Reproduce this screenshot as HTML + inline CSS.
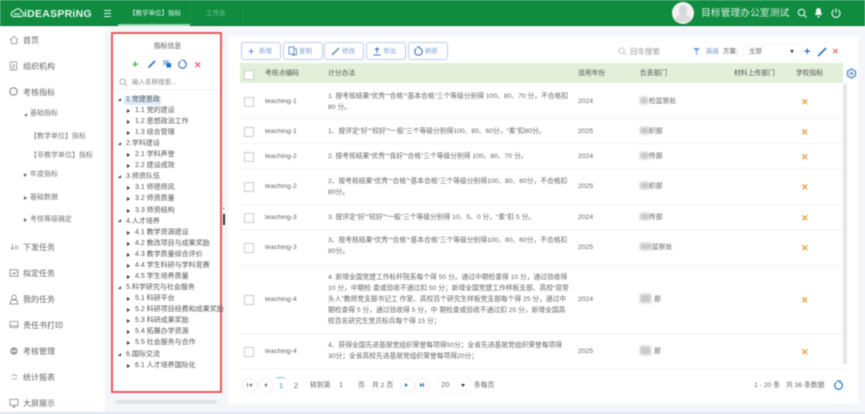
<!DOCTYPE html>
<html lang="zh"><head><meta charset="utf-8"><style>
html,body{margin:0;padding:0;width:865px;height:414px;overflow:hidden;background:#f4f6fc}
#w{position:relative;width:865px;height:414px;overflow:hidden;font-family:"Liberation Sans","Noto Sans CJK SC",sans-serif;font-size:6.8px;color:#666;filter:blur(.55px);background:#f4f6fc}
#w div,#w svg{position:absolute}
.t{white-space:nowrap;line-height:10px;margin-top:.7px}
.m{font-size:8px;color:#666}
.m2{font-size:7px;color:#777}
.t.tr{font-size:7px;color:#555;margin-top:0}
.tri{left:126.500px;width:0;height:0;border-left:3.500px solid #333;border-top:2px solid transparent;border-bottom:2px solid transparent}
.trd{left:118px;width:0;height:0;border-right:3px solid #333;border-top:3px solid transparent}
.st{left:24px;width:0;height:0;border-left:3px solid #666;border-top:2px solid transparent;border-bottom:2px solid transparent}
.btn{top:42px;width:40px;height:18px;border:1px solid #bccdea;border-radius:3px;background:#fff;box-sizing:border-box}
.bt{top:46px;margin-top:.7px;font-size:6.500px;color:#7f9fd0;white-space:nowrap;line-height:10px}
.cb{left:244px;width:8px;height:8px;border:1px solid #ccc;background:#fff;margin-top:.5px}
.ln{left:240px;width:603px;height:1px;background:#f1f2f5}
.x{left:801px;font-size:9px;color:#ee9b3c;font-weight:bold;line-height:10px;margin-top:.7px}
.c{font-size:6.750px;line-height:11px;color:#666;white-space:nowrap;left:328px;margin-top:.7px}
.h{top:68px;margin-top:.7px;font-size:6.800px;color:#555;white-space:nowrap;line-height:10px}
.blur{background:#c9c9c9;filter:blur(1.200px)}
.pc{top:378px;width:13px;height:13px;border:1px solid #f0f0f2;border-radius:50%;background:#fff}
.p{top:380px;margin-top:.7px;white-space:nowrap;line-height:10px;font-size:6.800px;color:#666}
</style></head><body><div id="w">
<!-- header -->
<div style="left:0;top:0;width:865px;height:26px;background:#0f8c40;border-bottom:1px solid #0b6e32;box-sizing:border-box"></div>
<svg style="left:10px;top:8px" width="14" height="10" viewBox="0 0 14 10" fill="none" stroke="#dff3e6" stroke-width="1.200"><path d="M3 8.500h8a2.300 2.300 0 0 0 .4-4.600A3.600 3.600 0 0 0 4.600 3 2.900 2.900 0 0 0 3 8.500z"/><path d="M4 6h6"/></svg>
<div class="t" style="left:24px;top:7px;font-size:10.500px;font-weight:bold;color:#eaf7ef;letter-spacing:.25px;line-height:12px">iDEASPRiNG</div>
<div style="left:104px;top:10px;width:7px;height:1px;background:#e6f5ec;box-shadow:0 3px #e6f5ec,0 6px #e6f5ec"></div>
<div class="t" style="left:129px;top:8px;color:#e6f5ec;font-size:6.500px">【教学单位】指标</div>
<div style="left:118px;top:24px;width:72px;height:2px;background:#9ad8af"></div>
<div style="left:190px;top:0;width:1px;height:25px;background:#1a9448"></div>
<div style="left:242px;top:0;width:1px;height:25px;background:#1a9448"></div>
<div class="t" style="left:206px;top:8px;color:#7fc79a;font-size:6.500px">工作台</div>
<div style="left:672px;top:2px;width:22px;height:22px;border-radius:50%;background:#f2f2f2"></div>
<div style="left:679px;top:5px;width:8px;height:11px;border-radius:50%;background:#d6d6d6"></div>
<div style="left:675px;top:15px;width:16px;height:7px;border-radius:8px 8px 3px 3px;background:#dcdcdc"></div>
<div class="t" style="left:701px;top:7px;font-size:9.800px;color:#d8f0e0;line-height:12px">目标管理办公室测试</div>
<svg style="left:796px;top:7px" width="12" height="12" viewBox="0 0 12 12" fill="none" stroke="#e6f5ec" stroke-width="1.100"><circle cx="5.500" cy="5.500" r="3.200"/><path d="M8 8l2.500 2.500"/></svg>
<svg style="left:813px;top:7px" width="11" height="12" viewBox="0 0 11 12" fill="#eef8f1"><path d="M5.500 1C3.500 1 3 3 3 5L2 8h7L8 5c0-2-.5-4-2.500-4zM4.500 9h2v1.500h-2z"/></svg>
<svg style="left:830px;top:7px" width="12" height="12" viewBox="0 0 12 12" fill="none" stroke="#e6f5ec" stroke-width="1.100"><path d="M3.800 3a4 4 0 1 0 4.400 0M6 1.500V6"/></svg>
<!-- sidebar -->
<div style="left:0;top:27px;width:105px;height:385px;background:#fff"></div>
<svg style="left:9px;top:35px" width="10" height="10" viewBox="0 0 11 11" fill="none" stroke="#888" stroke-width=".8"><path d="M1 5.500 5.500 1.500 10 5.500M2.500 4.500v5h6v-5"/></svg>
<div class="t m" style="left:23px;top:35px">首页</div>
<svg style="left:9px;top:61px" width="9" height="10" viewBox="0 0 10 12" fill="none" stroke="#888" stroke-width=".9"><rect x="1" y="1" width="8" height="10" rx="1"/><path d="M3 5h4M3 7h4M3 9h3"/></svg>
<div class="t m" style="left:23px;top:61px">组织机构</div>
<svg style="left:8px;top:86px" width="11" height="11" viewBox="0 0 12 12" fill="none" stroke="#888" stroke-width="1.200"><circle cx="6" cy="6" r="4"/></svg>
<div class="t m" style="left:23px;top:87px">考核指标</div>
<div class="trd" style="left:24px;top:113px;border-right-color:#666"></div>
<div class="t m2" style="left:30px;top:108px">基础指标</div>
<div class="t m2" style="left:30px;top:131px">【教学单位】指标</div>
<div class="t m2" style="left:30px;top:150px">【非教学单位】指标</div>
<div class="st" style="top:173px"></div>
<div class="t m2" style="left:30px;top:169px">年度指标</div>
<div class="st" style="top:196px"></div>
<div class="t m2" style="left:30px;top:192px">基础数据</div>
<div class="st" style="top:218px"></div>
<div class="t m2" style="left:30px;top:214px">考核等级确定</div>
<svg style="left:10px;top:243px" width="9" height="8" viewBox="0 0 11 10" fill="none" stroke="#888" stroke-width=".9"><path d="M3 1v7M1 6l2 2 2-2M7 3v5M9.500 3v5"/></svg>
<div class="t m" style="left:23px;top:242px">下发任务</div>
<svg style="left:9px;top:268px" width="10" height="10" viewBox="0 0 11 11" fill="none" stroke="#888" stroke-width=".9"><path d="M1 2h9v7H1zM3 7l2-2 1.500 1.500L9 4"/></svg>
<div class="t m" style="left:23px;top:268px">拟定任务</div>
<svg style="left:9px;top:294px" width="10" height="11" viewBox="0 0 11 12" fill="none" stroke="#888" stroke-width=".9"><circle cx="5.500" cy="3.500" r="2.500"/><path d="M1 11l1.500-4.500h6L10 11z"/></svg>
<div class="t m" style="left:23px;top:294px">我的任务</div>
<svg style="left:9px;top:320px" width="10" height="9" viewBox="0 0 11 10" fill="none" stroke="#888" stroke-width=".9"><rect x="1" y="1.500" width="9" height="7" rx="1"/><path d="M1 6.500h9"/></svg>
<div class="t m" style="left:23px;top:320px">责任书打印</div>
<svg style="left:9px;top:346px" width="10" height="10" viewBox="0 0 11 11" fill="none" stroke="#888" stroke-width="1"><circle cx="5.500" cy="5.500" r="3.500" fill="#aaa"/><path d="M2.500 5.500h6" stroke="#fff"/></svg>
<div class="t m" style="left:23px;top:346px">考核管理</div>
<svg style="left:11px;top:373px" width="8" height="7" viewBox="0 0 10 9" fill="none" stroke="#888" stroke-width=".9"><path d="M1 4l3-2 4 2M1 7.500h7"/></svg>
<div class="t m" style="left:23px;top:372px">统计报表</div>
<svg style="left:9px;top:398px" width="10" height="10" viewBox="0 0 11 11" fill="none" stroke="#888" stroke-width=".9"><rect x="1" y="1.500" width="9" height="6.500"/><path d="M3.500 10h4M5.500 8v2"/></svg>
<div class="t m" style="left:23px;top:398px">大屏展示</div>
<!-- tree panel -->
<div style="left:111px;top:32px;width:111px;height:361px;background:#fff;border:2px solid #ea5a5f;box-sizing:border-box;border-radius:1px"></div>
<div class="t" style="left:154px;top:41px;font-size:6.800px;color:#555">指标信息</div>
<div class="t" style="left:132px;top:59px;font-size:11px;font-weight:bold;color:#4caf50">+</div>
<svg style="left:147px;top:59px" width="10" height="10" viewBox="0 0 10 10" fill="none" stroke="#3f73c9" stroke-width="1.800"><path d="M1.500 8.500 8 2"/></svg>
<svg style="left:162px;top:59px" width="10" height="10" viewBox="0 0 10 10"><rect x="1" y="1" width="6" height="5" fill="#9fc7ef"/><rect x="4.500" y="4" width="4.500" height="4.500" fill="#1e6fd0"/></svg>
<svg style="left:177px;top:59px" width="11" height="11" viewBox="0 0 11 11" fill="none" stroke="#3b78c4" stroke-width="1.200"><path d="M7.500 2.200a3.800 3.800 0 1 1-4 0"/><path d="M3.800 1.200h3.600v2" stroke-width=".8"/></svg>
<div class="t" style="left:194px;top:59px;font-size:9px;font-weight:bold;color:#e8636a">✕</div>
<svg style="left:119px;top:78px" width="9" height="9" viewBox="0 0 10 10" fill="none" stroke="#aaa" stroke-width="1"><circle cx="4" cy="4" r="3"/><path d="M6.300 6.300 9 9"/></svg>
<div class="t" style="left:132px;top:77px;font-size:6.500px;color:#888">输入名称搜索...</div>
<div style="left:113px;top:89px;width:107px;height:1px;background:#f0f0f0"></div>
<div style="left:124px;top:95.500px;width:37px;height:9px;background:#dcebfa;border-radius:1px"></div>
<div class="trd" style="top:98px"></div><div class="t tr" style="left:126px;top:95px">1.党建思政</div>
<div class="tri" style="top:109px"></div><div class="t tr" style="left:135px;top:106px">1.1 党的建设</div>
<div class="tri" style="top:120px"></div><div class="t tr" style="left:135px;top:117px">1.2 思想政治工作</div>
<div class="tri" style="top:131px"></div><div class="t tr" style="left:135px;top:128px">1.3 综合管理</div>
<div class="trd" style="top:142px"></div><div class="t tr" style="left:126px;top:139px">2.学科建设</div>
<div class="tri" style="top:153px"></div><div class="t tr" style="left:135px;top:150px">2.1 学科声誉</div>
<div class="tri" style="top:164px"></div><div class="t tr" style="left:135px;top:161px">2.2 建设成效</div>
<div class="trd" style="top:175px"></div><div class="t tr" style="left:126px;top:172px">3.师资队伍</div>
<div class="tri" style="top:186px"></div><div class="t tr" style="left:135px;top:183px">3.1 师德师风</div>
<div class="tri" style="top:197px"></div><div class="t tr" style="left:135px;top:194px">3.2 师资质量</div>
<div class="tri" style="top:209px"></div><div class="t tr" style="left:135px;top:206px">3.3 师资结构</div>
<div class="trd" style="top:219px"></div><div class="t tr" style="left:126px;top:217px">4.人才培养</div>
<div class="tri" style="top:231px"></div><div class="t tr" style="left:135px;top:228px">4.1 教学资源建设</div>
<div class="tri" style="top:242px"></div><div class="t tr" style="left:135px;top:239px">4.2 教改项目与成果奖励</div>
<div class="tri" style="top:253px"></div><div class="t tr" style="left:135px;top:250px">4.3 教学质量综合评价</div>
<div class="tri" style="top:264px"></div><div class="t tr" style="left:135px;top:261px">4.4 学生科研与学科竞赛</div>
<div class="tri" style="top:275px"></div><div class="t tr" style="left:135px;top:272px">4.5 学生培养质量</div>
<div class="trd" style="top:286px"></div><div class="t tr" style="left:126px;top:283px">5.科学研究与社会服务</div>
<div class="tri" style="top:297px"></div><div class="t tr" style="left:135px;top:294px">5.1 科研平台</div>
<div class="tri" style="top:308px"></div><div class="t tr" style="left:135px;top:305px">5.2 科研项目经费和成果奖励</div>
<div class="tri" style="top:319px"></div><div class="t tr" style="left:135px;top:316px">5.3 科研成果奖励</div>
<div class="tri" style="top:330px"></div><div class="t tr" style="left:135px;top:327px">5.4 拓展办学资源</div>
<div class="tri" style="top:341px"></div><div class="t tr" style="left:135px;top:338px">5.5 社会服务与合作</div>
<div class="trd" style="top:353px"></div><div class="t tr" style="left:126px;top:350px">6.国际交流</div>
<div class="tri" style="top:364px"></div><div class="t tr" style="left:135px;top:361px">6.1 人才培养国际化</div>
<div style="left:115px;top:400px;width:102px;height:4px;border-radius:2px;background:#e4e4e6"></div>
<div style="left:223px;top:208px;width:1px;height:1px;background:#333"></div>
<div style="left:223px;top:214px;width:1.500px;height:11px;background:#333"></div>
<!-- main -->
<div style="left:228px;top:36px;width:630px;height:368px;background:#fff"></div>
<div class="btn" style="left:241px"></div>
<div class="t" style="left:248px;top:45px;font-size:11px;color:#3b78c4;line-height:12px">+</div><div class="bt" style="left:259px">新增</div>
<div class="btn" style="left:283px"></div>
<svg style="left:288px;top:46px" width="10" height="10" viewBox="0 0 10 10" fill="none" stroke="#5f8ac8" stroke-width=".9"><rect x="1" y="1" width="5" height="7"/><path d="M6 3h2.500v6H4"/></svg><div class="bt" style="left:299px">复制</div>
<div class="btn" style="left:324px"></div>
<svg style="left:331px;top:47px" width="9" height="9" viewBox="0 0 9 9" fill="none" stroke="#5f8ac8" stroke-width="1.500"><path d="M1 8 8 1"/></svg><div class="bt" style="left:342px">修改</div>
<div class="btn" style="left:366px"></div>
<svg style="left:372px;top:47px" width="10" height="9" viewBox="0 0 10 9" fill="none" stroke="#3f73c9" stroke-width="1"><path d="M5 6V1M3 3l2-2 2 2M1.500 8h7"/></svg><div class="bt" style="left:383px">导出</div>
<div class="btn" style="left:408px"></div>
<svg style="left:413px;top:46px" width="11" height="11" viewBox="0 0 11 11" fill="none" stroke="#3b78c4" stroke-width="1.100"><path d="M7.500 2.500a3.700 3.700 0 1 1-4 0M3.500 1h3v2"/></svg><div class="bt" style="left:425px">刷新</div>
<svg style="left:618px;top:47px" width="9" height="9" viewBox="0 0 10 10" fill="none" stroke="#bbb" stroke-width="1"><circle cx="4" cy="4" r="3"/><path d="M6.300 6.300 9 9"/></svg>
<div class="t" style="left:630px;top:46px;font-size:7.500px;color:#999">回车搜索</div>
<svg style="left:692px;top:47px" width="9" height="9" viewBox="0 0 9 9"><path d="M1 1h7L5 4v4H4V4z" fill="#6aa5d8"/></svg>
<div class="t" style="left:706px;top:46px;font-size:6.500px;color:#6a96cf">高级</div>
<div class="t" style="left:723px;top:46px;font-size:6.500px;color:#555">方案:</div>
<div style="left:743px;top:44px;width:56px;height:15px;border:1px solid #f6f6f8;border-radius:3px;background:#fff"></div>
<div class="t" style="left:749px;top:46px;font-size:6.500px;color:#666">全部</div>
<div style="left:790px;top:50px;width:0;height:0;border-top:3px solid #333;border-left:2.500px solid transparent;border-right:2.500px solid transparent"></div>
<div class="t" style="left:804px;top:45px;font-size:11px;font-weight:bold;color:#2a74c9;line-height:12px">+</div>
<svg style="left:817px;top:47px" width="10" height="10" viewBox="0 0 10 10" fill="none" stroke="#2a74c9" stroke-width="1.700"><path d="M1 9 9 1"/></svg>
<div class="t" style="left:832px;top:46px;font-size:8px;font-weight:bold;color:#e8636a">✕</div>
<!-- table head -->
<div style="left:240px;top:63px;width:603px;height:20px;background:#e3efd9"></div>
<div class="cb" style="top:69px"></div>
<div class="h" style="left:265px">考核点编码</div>
<div class="h" style="left:328px">计分办法</div>
<div class="h" style="left:578px">适用年份</div>
<div class="h" style="left:640px">负责部门</div>
<div class="h" style="left:734px">材料上传部门</div>
<div class="h" style="left:796px">学校指标</div>
<svg style="left:846px;top:68px" width="11" height="11" viewBox="0 0 11 11" fill="none" stroke="#7aa3d0" stroke-width="1.800"><path d="M5.500 1 9.400 3.250V7.750L5.500 10 1.600 7.750V3.250z"/><circle cx="5.500" cy="5.500" r=".8"/></svg>
<div style="left:843px;top:84px;width:4px;height:280px;background:#e6e6e6"></div>
<!-- rows -->
<div class="ln" style="top:118px"></div><div class="ln" style="top:143px"></div><div class="ln" style="top:168px"></div><div class="ln" style="top:204px"></div><div class="ln" style="top:229px"></div><div class="ln" style="top:265px"></div><div class="ln" style="top:333px"></div><div class="ln" style="top:368px"></div>
<div class="cb" style="top:96px"></div><div class="t" style="left:265px;top:96px">teaching-1</div>
<div class="c" style="top:90.500px">1. 按考核结果“优秀”“合格”“基本合格”三个等级分别得 100、80、70 分，不合格扣<br>80 分。</div>
<div class="t" style="left:578px;top:96px">2024</div><div class="blur" style="left:640px;top:97px;width:8px;height:7px"></div><div class="t" style="left:649px;top:96px">检监察处</div><div class="x" style="top:96px">✕</div>
<div class="cb" style="top:126px"></div><div class="t" style="left:265px;top:126px">teaching-1</div>
<div class="c" style="top:125.500px">1、按评定“好”“较好”“一般”三个等级分别得100、80、60分，“差”扣80分。</div>
<div class="t" style="left:578px;top:126px">2025</div><div class="blur" style="left:640px;top:127px;width:9px;height:7px"></div><div class="t" style="left:649px;top:126px">织部</div><div class="x" style="top:126px">✕</div>
<div class="cb" style="top:151px"></div><div class="t" style="left:265px;top:151px">teaching-2</div>
<div class="c" style="top:150.500px">2. 按考核结果“优秀”“良好”“合格”三个等级分别得 100、80、70 分。</div>
<div class="t" style="left:578px;top:151px">2024</div><div class="blur" style="left:640px;top:152px;width:9px;height:7px"></div><div class="t" style="left:649px;top:151px">传部</div><div class="x" style="top:151px">✕</div>
<div class="cb" style="top:181px"></div><div class="t" style="left:265px;top:181px">teaching-2</div>
<div class="c" style="top:175.500px">2、按考核结果“优秀”“合格”“基本合格”三个等级分别得100、80、60分，不合格扣<br>80分。</div>
<div class="t" style="left:578px;top:181px">2025</div><div class="blur" style="left:640px;top:182px;width:9px;height:7px"></div><div class="t" style="left:649px;top:181px">织部</div><div class="x" style="top:181px">✕</div>
<div class="cb" style="top:212px"></div><div class="t" style="left:265px;top:212px">teaching-3</div>
<div class="c" style="top:211.500px">3. 按评定“好”“较好”“一般”三个等级分别得 10、5、0 分，“差”扣 5 分。</div>
<div class="t" style="left:578px;top:212px">2024</div><div class="blur" style="left:640px;top:213px;width:9px;height:7px"></div><div class="t" style="left:649px;top:212px">传部</div><div class="x" style="top:212px">✕</div>
<div class="cb" style="top:242px"></div><div class="t" style="left:265px;top:242px">teaching-3</div>
<div class="c" style="top:234.500px">3、按考核结果“优秀”“合格”“基本合格”三个等级分别得100、80、60分，不合格扣<br>80分。</div>
<div class="t" style="left:578px;top:242px">2025</div><div class="blur" style="left:640px;top:243px;width:12px;height:7px"></div><div class="t" style="left:652px;top:242px">监察处</div><div class="x" style="top:242px">✕</div>
<div class="cb" style="top:294px"></div><div class="t" style="left:265px;top:294px">teaching-4</div>
<div class="c" style="top:271.500px">4. 新增全国党建工作标杆院系每个得 50 分。通过中期检查得 10 分，通过验收得<br>10 分，中期检 查或验收不通过扣 50 分；新增全国党建工作样板支部、高校“双带<br>头人”教师党支部书记工 作室、高校百个研究生样板党支部每个得 25 分，通过中<br>期检查得 5 分，通过验收得 5 分，中 期检查或验收不通过扣 25 分，新增全国高<br>校百名研究生党员标兵每个得 15 分；</div>
<div class="t" style="left:578px;top:294px">2024</div><div class="blur" style="left:640px;top:294px;width:11px;height:9px"></div><div class="t" style="left:654px;top:294px">部</div><div class="x" style="top:294px">✕</div>
<div class="cb" style="top:346px"></div><div class="t" style="left:265px;top:346px">teaching-4</div>
<div class="c" style="top:339.500px">4、获得全国先进基层党组织荣誉每项得50分；全省先进基层党组织荣誉每项得<br>30分；全省高校先进基层党组织荣誉每项得20分；</div>
<div class="t" style="left:578px;top:346px">2025</div><div class="blur" style="left:640px;top:346px;width:11px;height:9px"></div><div class="t" style="left:654px;top:346px">部</div><div class="x" style="top:346px">✕</div>
<!-- pagination -->
<div class="pc" style="left:242px"></div><div class="pc" style="left:258px"></div><div class="pc" style="left:400px"></div><div class="pc" style="left:415px"></div>
<div style="left:247px;top:383px;width:1px;height:4px;background:#777"></div>
<div style="left:249px;top:383px;width:0;height:0;border-right:3px solid #777;border-top:2px solid transparent;border-bottom:2px solid transparent"></div>
<div style="left:264px;top:383px;width:0;height:0;border-right:3px solid #777;border-top:2px solid transparent;border-bottom:2px solid transparent"></div>
<div class="p" style="left:279px;color:#3f8fc4;font-size:7.500px">1</div>
<div style="left:275px;top:377px;width:11px;height:3px;border-top:1px solid #7fb5d8;border-radius:50%"></div>
<div class="p" style="left:294px;font-size:7.500px">2</div>
<div class="p" style="left:310px">转到第</div>
<div class="p" style="left:339px;top:379px;font-size:7.500px">1</div>
<div class="p" style="left:358px">页</div>
<div class="p" style="left:372px">共 2 页</div>
<div style="left:405px;top:383px;width:0;height:0;border-left:3px solid #2b6fb5;border-top:2px solid transparent;border-bottom:2px solid transparent"></div>
<div style="left:420px;top:383px;width:0;height:0;border-left:3px solid #2b6fb5;border-top:2px solid transparent;border-bottom:2px solid transparent"></div>
<div style="left:423px;top:383px;width:1px;height:4px;background:#2b6fb5"></div>
<div style="left:437px;top:377px;width:32px;height:15px;border:1px solid #f6f6f8;border-radius:3px;background:#fff"></div>
<div class="p" style="left:441px;top:379px;font-size:7.500px">20</div>
<div style="left:461px;top:384px;width:0;height:0;border-top:3px solid #333;border-left:2.500px solid transparent;border-right:2.500px solid transparent"></div>
<div class="p" style="left:474px">条每页</div>
<div class="p" style="left:754px">1 - 20 条</div>
<div class="p" style="left:786px">共 36 条数据</div>
<svg style="left:833px;top:380px" width="11" height="11" viewBox="0 0 11 11" fill="none" stroke="#2f86c9" stroke-width="1.300"><path d="M7.500 2.200a3.800 3.800 0 1 1-4 0M3.700 1h3.300v2"/></svg>
<div style="left:0;top:412px;width:865px;height:2px;background:#dfe5f3"></div>
</div></body></html>
